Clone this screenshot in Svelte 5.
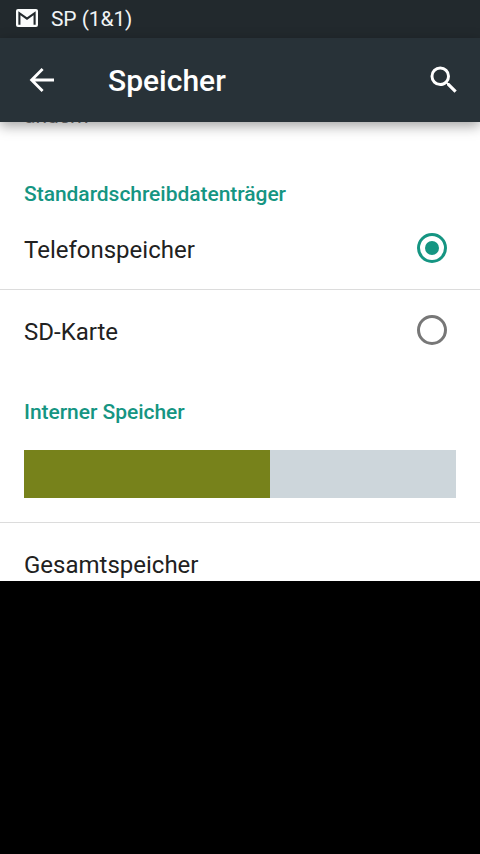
<script lang="ts">
  type Volume = { id: string; name: string };

  const volumes: Volume[] = [
    { id: "phone", name: "Telefonspeicher" },
    { id: "sd", name: "SD-Karte" },
  ];

  const usedPercent = 56.95;

  let selected = $state("phone");
</script>

<div class="screen">
  <div class="status">
    <svg width="22" height="18" viewBox="0 0 22 18" aria-hidden="true">
      <rect width="22" height="18" rx="2" fill="#fafcfc" />
      <path d="M3.4 15.8V4.2L11 9.6L18.6 4.2V15.8" fill="none" stroke="#22292d" stroke-width="2.1" />
    </svg>
    <span>SP (1&amp;1)</span>
  </div>

  <header class="toolbar">
    <button class="icon" aria-label="Zurück">
      <svg width="36" height="36" viewBox="0 0 24 24">
        <path d="M20 12H5.4M12.4 4.7L5.1 12L12.4 19.3" fill="none" stroke="#fff" stroke-width="1.9" />
      </svg>
    </button>
    <h1>Speicher</h1>
    <button class="icon" aria-label="Suchen">
      <svg width="36" height="36" viewBox="0 0 24 24">
        <path
          fill="#fff"
          d="M15.5 14h-.79l-.28-.27A6.47 6.47 0 0 0 16 9.5 6.5 6.5 0 1 0 9.5 16c1.61 0 3.09-.59 4.23-1.57l.27.28v.79l5 4.99L20.49 19l-4.99-5zm-6 0C7.01 14 5 11.99 5 9.5S7.01 5 9.5 5 14 7.01 14 9.5 11.99 14 9.5 14z"
        />
      </svg>
    </button>
  </header>

  <main>
    <p class="summary">ändern</p>

    <h2>Standardschreibdatenträger</h2>
    {#each volumes as volume (volume.id)}
      <button
        class="row"
        role="radio"
        aria-checked={selected === volume.id}
        onclick={() => (selected = volume.id)}
      >
        <span class="name">{volume.name}</span>
        <span class="radio" class:checked={selected === volume.id}></span>
      </button>
    {/each}

    <h2 class="internal">Interner Speicher</h2>
    <div class="usage">
      <div class="used" style="width:{usedPercent}%"></div>
    </div>
    <div class="total">Gesamtspeicher</div>
  </main>
</div>

<style>
  :global(body) {
    margin: 0;
    background: #000;
  }

  .screen {
    width: 480px;
    height: 854px;
    background: #000;
    color: #212121;
    font-family: Roboto, sans-serif;
    overflow: hidden;
  }

  .status {
    display: flex;
    align-items: center;
    gap: 13px;
    box-sizing: border-box;
    height: 38px;
    padding: 0 16px 2px;
    background: #22292d;
    color: #f1f4f5;
    font-size: 21px;
    letter-spacing: -0.1px;
  }

  .status span {
    padding-top: 2px;
  }

  .toolbar {
    position: relative;
    z-index: 1;
    display: flex;
    align-items: center;
    box-sizing: border-box;
    height: 84px;
    padding: 0 18px 0 24px;
    background: #283238;
    box-shadow: 0 4px 12px rgba(0, 0, 0, 0.36);
  }

  button {
    padding: 0;
    border: 0;
    background: none;
    color: inherit;
    font-family: inherit;
  }

  .icon {
    display: flex;
  }

  h1 {
    flex: 1;
    margin: 0 0 0 48px;
    padding-top: 2px;
    color: #fff;
    font-size: 30px;
    font-weight: 500;
    line-height: 36px;
  }

  main {
    height: 459px;
    background: #fff;
    overflow: hidden;
  }

  .summary {
    height: 48px;
    margin: -18px 0 0;
    padding-left: 24px;
    color: #757575;
    font-size: 21px;
    line-height: 25px;
  }

  h2 {
    box-sizing: border-box;
    height: 55px;
    margin: 0;
    padding: 30px 24px 0;
    color: #159582;
    font-size: 21px;
    font-weight: 500;
    letter-spacing: -0.04px;
    line-height: 25px;
  }

  .row {
    display: flex;
    align-items: center;
    justify-content: space-between;
    box-sizing: border-box;
    width: 100%;
    height: 82px;
    padding: 0 33px 0 24px;
    font-size: 24px;
    text-align: left;
  }

  .row + .row {
    padding-bottom: 1px;
    border-top: 1px solid #dcdcdc;
  }

  .name {
    padding-top: 3px;
  }

  .radio {
    display: grid;
    place-items: center;
    box-sizing: border-box;
    width: 30px;
    height: 30px;
    border: 3px solid #777;
    border-radius: 50%;
  }

  .radio.checked {
    border-color: #159582;
  }

  .radio.checked::after {
    content: "";
    width: 14px;
    height: 14px;
    border-radius: 50%;
    background: #159582;
  }

  .internal {
    height: 79px;
    padding-top: 29px;
  }

  .usage {
    height: 48px;
    margin: 0 24px 24px;
    background: #cdd6db;
  }

  .used {
    height: 100%;
    background: #77821b;
  }

  .total {
    padding: 28px 24px 0;
    border-top: 1px solid #dcdcdc;
    font-size: 24px;
    line-height: 28px;
  }
</style>
